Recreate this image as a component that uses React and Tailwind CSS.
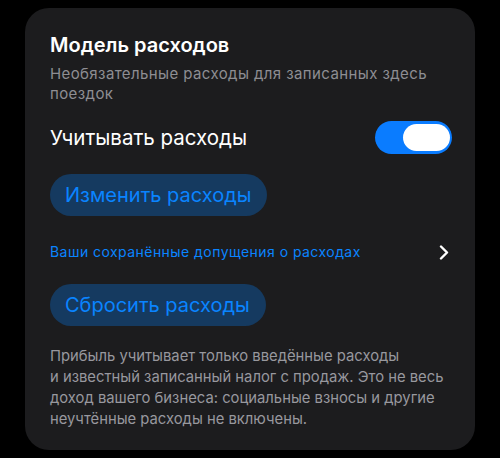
import React, { useState } from 'react';

function Toggle({ on, onChange }) {
  return (
    <button
      onClick={() => onChange(!on)}
      className={`relative w-[77px] h-[33px] rounded-full shrink-0 -mr-[2px] ${on ? 'bg-[#0a7cff]' : 'bg-[#39393d]'}`}
    >
      <span
        className={`absolute top-[3px] h-[27px] w-[47px] rounded-full bg-white ${on ? 'right-[2px]' : 'left-[2px]'}`}
      />
    </button>
  );
}

function PillButton({ children }) {
  return (
    <button className="h-[42px] pl-[15px] pr-[16px] rounded-full bg-[#153a60] text-[#0a84ff] text-[20px] leading-none self-start">
      {children}
    </button>
  );
}

export default function App() {
  const [trackCosts, setTrackCosts] = useState(true);

  return (
    <div className="min-h-[458px] w-[500px] bg-black pt-[8px] px-[25px] font-['Inter','Noto_Sans',sans-serif]">
      <div className="bg-[#1c1c1e] rounded-[24px] pt-[25px] pb-[20px] px-[25px] flex flex-col">
        <h2 className="text-white text-[20px] font-semibold leading-[24px]">Модель расходов</h2>
        <p className="mt-[7px] text-[#8e8e93] text-[15px] leading-[20px] tracking-[0.4px]">
          Необязательные расходы для записанных здесь поездок
        </p>

        <div className="mt-[17px] flex items-center justify-between">
          <span className="text-white text-[20.5px] leading-[26px]">Учитывать расходы</span>
          <Toggle on={trackCosts} onChange={setTrackCosts} />
        </div>

        <div className="mt-[20px] flex flex-col">
          <PillButton>Изменить расходы</PillButton>
        </div>

        <button className="mt-[26px] flex items-center justify-between text-left">
          <span className="text-[#0a84ff] text-[14px] leading-[20px] tracking-[0.45px]">
            Ваши сохранённые допущения о расходах
          </span>
          <svg width="10" height="15" viewBox="0 0 10 15" className="mr-[1px]">
            <path d="M2 1.5 L8 7.5 L2 13.5" fill="none" stroke="white" strokeWidth="2.4" strokeLinecap="round" strokeLinejoin="round" />
          </svg>
        </button>

        <div className="mt-[22px] flex flex-col">
          <PillButton>Сбросить расходы</PillButton>
        </div>

        <p className="mt-[20px] text-[#98989e] text-[14.8px] leading-[21px] whitespace-nowrap">
          Прибыль учитывает только введённые расходы
          <br />и известный записанный налог с продаж. Это не весь
          <br />доход вашего бизнеса: социальные взносы и другие
          <br />неучтённые расходы не включены.
        </p>
      </div>
    </div>
  );
}
